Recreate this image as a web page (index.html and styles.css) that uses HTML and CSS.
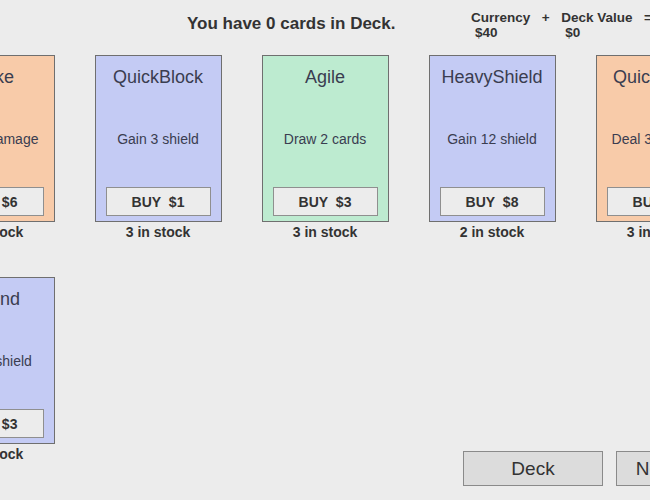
FILE: index.html
```html
<!DOCTYPE html>
<html>
<head>
<meta charset="utf-8">
<link rel="stylesheet" href="styles.css">
</head>
<body>
<div class="app">
  <header class="header">
    <div class="spacer"></div>
    <h1 class="deck-count">You have 0 cards in Deck.</h1>
    <div class="money">
      <span>Currency</span><span>+</span><span>Deck Value</span><span>=</span><span>Total</span>
      <span class="val">$40</span><span></span><span class="val">$0</span><span></span><span class="val">$40</span>
    </div>
  </header>
  <main class="shop">
    <div class="cell">
      <div class="card attack">
        <div class="name">Strike</div>
        <div class="desc">Deal 6 damage</div>
        <button class="buy">BUY&nbsp;&nbsp;$6</button>
      </div>
      <div class="stock">3 in stock</div>
    </div>
    <div class="cell">
      <div class="card shield">
        <div class="name">QuickBlock</div>
        <div class="desc">Gain 3 shield</div>
        <button class="buy">BUY&nbsp;&nbsp;$1</button>
      </div>
      <div class="stock">3 in stock</div>
    </div>
    <div class="cell">
      <div class="card draw">
        <div class="name">Agile</div>
        <div class="desc">Draw 2 cards</div>
        <button class="buy">BUY&nbsp;&nbsp;$3</button>
      </div>
      <div class="stock">3 in stock</div>
    </div>
    <div class="cell">
      <div class="card shield">
        <div class="name">HeavyShield</div>
        <div class="desc">Gain 12 shield</div>
        <button class="buy">BUY&nbsp;&nbsp;$8</button>
      </div>
      <div class="stock">2 in stock</div>
    </div>
    <div class="cell">
      <div class="card attack">
        <div class="name">QuickStrike</div>
        <div class="desc">Deal 3 damage</div>
        <button class="buy">BUY&nbsp;&nbsp;$1</button>
      </div>
      <div class="stock">3 in stock</div>
    </div>
    <div class="cell">
      <div class="card shield">
        <div class="name">Defend</div>
        <div class="desc">Gain 5 shield</div>
        <button class="buy">BUY&nbsp;&nbsp;$3</button>
      </div>
      <div class="stock">3 in stock</div>
    </div>
  </main>
  <footer class="footer">
    <button class="nav">Deck</button>
    <button class="nav">Next Round</button>
  </footer>
</div>
</body>
</html>
```
FILE: styles.css
```css
html, body {
  margin: 0;
  padding: 0;
  height: 100%;
}
body {
  background: #ececec;
  font-family: "Liberation Sans", Arial, sans-serif;
  color: #333;
  display: flex;
  justify-content: center;
  overflow: hidden;
}
.app {
  width: 795px;
  flex-shrink: 0;
  height: 100vh;
  display: flex;
  flex-direction: column;
}
.header {
  height: 55px;
  flex-shrink: 0;
  box-sizing: border-box;
  padding-top: 10px;
  display: grid;
  grid-template-columns: 259.5px 284px 1fr;
  align-items: start;
}
.deck-count {
  margin: 4px 0 0;
  font-size: 17px;
  line-height: 20px;
  font-weight: bold;
  white-space: nowrap;
}
.money {
  display: grid;
  grid-template-columns: auto auto auto auto auto;
  justify-content: start;
  column-gap: 11.5px;
  font-size: 13.5px;
  line-height: 15px;
  font-weight: bold;
  white-space: nowrap;
}
.money .val {
  padding-left: 4px;
}
.shop {
  flex: 1;
  min-height: 0;
  display: grid;
  grid-template-columns: repeat(5, 127px);
  column-gap: 40px;
  row-gap: 37px;
  align-content: start;
}
.cell {
  display: flex;
  flex-direction: column;
  align-items: center;
}
.card {
  width: 127px;
  height: 167px;
  box-sizing: border-box;
  border: 1px solid #6f6f6f;
  padding: 10px 10px 5px;
  display: flex;
  flex-direction: column;
  align-items: center;
}
.card.attack { background: #f8cba9; }
.card.shield { background: #c4cbf4; }
.card.draw { background: #bdebd0; }
.name {
  font-size: 18px;
  line-height: 22px;
  color: #3a3d50;
  white-space: nowrap;
}
.desc {
  margin-top: 43px;
  font-size: 14px;
  line-height: 17px;
  color: #3a3d50;
  white-space: nowrap;
}
.buy {
  margin-top: auto;
  width: 105px;
  height: 29px;
  box-sizing: border-box;
  background: #ececec;
  border: 1px solid #8f8f8f;
  font-family: "Liberation Sans", Arial, sans-serif;
  font-size: 14px;
  font-weight: bold;
  color: #333;
  padding: 0;
}
.stock {
  margin-top: 2px;
  font-size: 14px;
  line-height: 16px;
  font-weight: bold;
  white-space: nowrap;
}
.footer {
  flex-shrink: 0;
  display: flex;
  gap: 13px;
  padding-left: 535.5px;
  margin-bottom: 14px;
}
.nav {
  width: 140px;
  height: 35px;
  flex-shrink: 0;
  box-sizing: border-box;
  background: #dcdcdc;
  border: 1px solid #8a8a8a;
  font-family: "Liberation Sans", Arial, sans-serif;
  font-size: 19px;
  color: #333;
  padding: 0;
  white-space: nowrap;
}
```
